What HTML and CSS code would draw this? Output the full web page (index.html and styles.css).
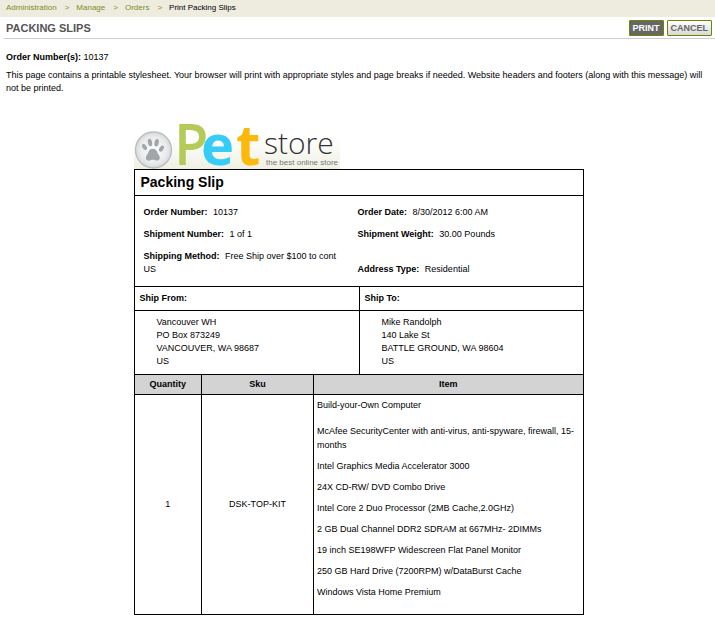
FILE: index.html
```html
<!DOCTYPE html>
<html lang="en">
<head>
<meta charset="utf-8">
<meta name="viewport" content="width=device-width, initial-scale=1">
<title>Print Packing Slips</title>
<link rel="stylesheet" href="styles.css">
</head>
<body>
<nav class="breadcrumb" aria-label="Breadcrumb">
  <a href="#">Administration</a><span class="sep">&gt;</span><a href="#">Manage</a><span class="sep">&gt;</span><a href="#">Orders</a><span class="sep">&gt;</span><span>Print Packing Slips</span>
</nav>
<header class="titlebar">
  <h1>PACKING SLIPS</h1>
  <div class="actions">
    <button type="button" class="btn btn-dark">PRINT</button>
    <button type="button" class="btn">CANCEL</button>
  </div>
</header>
<main>
  <div class="intro">
    <p><b>Order Number(s):</b> 10137</p>
    <p>This page contains a printable stylesheet. Your browser will print with appropriate styles and page breaks if needed. Website headers and footers (along with this message) will not be printed.</p>
  </div>
  <article class="slip">
    <svg class="logo" viewBox="0 0 206 44" role="img" aria-label="Pet store">
      <defs>
        <linearGradient id="haze" x1="0" y1="0" x2="0" y2="1">
          <stop offset="0.3" stop-color="#fff"/>
          <stop offset="1" stop-color="#eef0e2"/>
        </linearGradient>
        <radialGradient id="disc">
          <stop offset="0" stop-color="#fff"/>
          <stop offset="0.75" stop-color="#e8eaeb"/>
          <stop offset="1" stop-color="#d5d9da"/>
        </radialGradient>
      </defs>
      <rect width="206" height="44" fill="url(#haze)"/>
      <circle cx="19.500" cy="25" r="18" fill="url(#disc)" stroke="#b9bebf" stroke-width="1.300"/>
      <g fill="#a3a6a8">
        <ellipse cx="10.500" cy="22" rx="2" ry="3.300" transform="rotate(-32 10.500 22)"/>
        <ellipse cx="16" cy="17.500" rx="2.100" ry="3.800" transform="rotate(-12 16 17.500)"/>
        <ellipse cx="22.600" cy="17.800" rx="2.100" ry="3.800" transform="rotate(12 22.600 17.800)"/>
        <ellipse cx="27.500" cy="23.600" rx="2" ry="3.300" transform="rotate(35 27.500 23.600)"/>
        <path d="M18.600 23.800c3 0 4.300 2 5 4.200.6 1.700 2.500 3 2.200 5.200-.4 2.400-2.800 2.700-4.500 2-1.900-.7-3.600-.6-5.100.1-2 .8-4.200.2-4.400-2.100-.2-2.300 1.600-3.400 2.300-5.300.8-2.400 1.800-4.100 4.500-4.100z"/>
      </g>
      <g class="pet">
        <text class="cap" x="41" y="39">P</text>
        <text x="67" y="40" fill="#35cdf8">e</text>
        <text x="102" y="40" fill="#fdb90b">t</text>
      </g>
      <text class="store" x="130" y="29">store</text>
      <text class="tagline" x="132" y="40">the best online store</text>
    </svg>
    <div class="sheet">
      <h2>Packing Slip</h2>
      <div class="facts">
        <p><b>Order Number:</b> 10137</p>
        <p><b>Order Date:</b> 8/30/2012 6:00 AM</p>
        <p><b>Shipment Number:</b> 1 of 1</p>
        <p><b>Shipment Weight:</b> 30.00 Pounds</p>
        <p><b>Shipping Method:</b> Free Ship over $100 to cont US</p>
        <p><b>Address Type:</b> Residential</p>
      </div>
      <div class="parties">
        <section>
          <h3>Ship From:</h3>
          <address>Vancouver WH<br>PO Box 873249<br>VANCOUVER, WA 98687<br>US</address>
        </section>
        <section>
          <h3>Ship To:</h3>
          <address>Mike Randolph<br>140 Lake St<br>BATTLE GROUND, WA 98604<br>US</address>
        </section>
      </div>
      <table class="items">
        <thead>
          <tr><th class="qty" scope="col">Quantity</th><th class="sku" scope="col">Sku</th><th scope="col">Item</th></tr>
        </thead>
        <tbody>
          <tr>
            <td>1</td>
            <td>DSK-TOP-KIT</td>
            <td class="detail">
              <p>Build-your-Own Computer</p>
              <ul>
                <li>McAfee SecurityCenter with anti-virus, anti-spyware, firewall, 15-months</li>
                <li>Intel Graphics Media Accelerator 3000</li>
                <li>24X CD-RW/ DVD Combo Drive</li>
                <li>Intel Core 2 Duo Processor (2MB Cache,2.0GHz)</li>
                <li>2 GB Dual Channel DDR2 SDRAM at 667MHz- 2DIMMs</li>
                <li>19 inch SE198WFP Widescreen Flat Panel Monitor</li>
                <li>250 GB Hard Drive (7200RPM) w/DataBurst Cache</li>
                <li>Windows Vista Home Premium</li>
              </ul>
            </td>
          </tr>
        </tbody>
      </table>
    </div>
  </article>
</main>
</body>
</html>
```
FILE: styles.css
```css
* { box-sizing: border-box; }

body {
  margin: 0;
  background: #fff;
  color: #000;
  font: 9px/13px "Liberation Sans", Arial, sans-serif;
}

h1, h2, h3, p, ul { margin: 0; padding: 0; }

.breadcrumb {
  padding: 1px 6px 3px;
  background: #eeebdf;
  font-size: 8px;
}
.breadcrumb a, .sep { color: #7b8e1e; text-decoration: none; }
.sep { margin: 0 7px 0 8px; }

.titlebar {
  display: flex;
  align-items: center;
  justify-content: space-between;
  height: 22px;
  margin-left: 4px;
  padding: 0 3px 0 2px;
  border-bottom: 1px solid #ccc;
}
.titlebar h1 { color: #555; font-size: 11px; line-height: 14px; }
.actions { display: flex; gap: 3px; }
.btn {
  height: 16px;
  padding: 0 3px;
  border: 1px solid #6b8500;
  border-radius: 1px;
  background: linear-gradient(#fff, #d8d8d8);
  color: #666;
  font: bold 9px/14px "Liberation Sans", Arial, sans-serif;
}
.btn-dark { background: #666; color: #fff; }

main { padding-left: 2px; }
.intro { padding: 12px 6px 0 4px; }
.intro p + p { margin-top: 5px; }

.slip {
  width: 100%;
  max-width: 450px;
  margin: 30px auto 8px;
}
.logo { display: block; width: 206px; height: 44px; overflow: visible; }
.pet { font: 700 56px "Open Sans", sans-serif; }
.cap { font-size: 54px; font-weight: 400; fill: #b4cb59; stroke: #b4cb59; stroke-width: 2px; }
.store { font: 300 30px "Open Sans", sans-serif; fill: #333; }
.tagline { font: 8px "Liberation Sans", Arial, sans-serif; fill: #777; }

.sheet { border: 1px solid #000; }
.sheet h2 {
  padding: 4px 6px 5px;
  font-size: 14px;
  line-height: 16px;
}
.facts {
  display: grid;
  grid-template-columns: 194px 1fr;
  column-gap: 20px;
  row-gap: 9px;
  align-items: end;
  padding: 10px 9px;
  border-top: 1px solid #000;
}
.facts b { margin-right: 3px; }

.parties {
  display: grid;
  grid-template-columns: 1fr 1fr;
  border-top: 1px solid #000;
}
.parties section + section { border-left: 1px solid #000; }
.parties h3 {
  padding: 5px;
  border-bottom: 1px solid #000;
  font-size: 9px;
}
.parties address { padding: 5px 22px 6px; font-style: normal; }

.items {
  width: 100%;
  border-collapse: collapse;
  table-layout: fixed;
}
.items th, .items td { border: 1px solid #000; text-align: center; }
.items tr > :first-child { border-left: 0; }
.items tr > :last-child { border-right: 0; }
.items tbody td { border-bottom: 0; }
.items th { padding: 3px; background: #d3d3d3; }
.items .qty { width: 67px; }
.items .sku { width: 112px; }
.items .detail { padding: 4px 3px 15px; text-align: left; }
.detail ul { margin-top: 12px; list-style: none; }
.detail li { line-height: 14px; }
.detail li + li { margin-top: 7px; }
```
